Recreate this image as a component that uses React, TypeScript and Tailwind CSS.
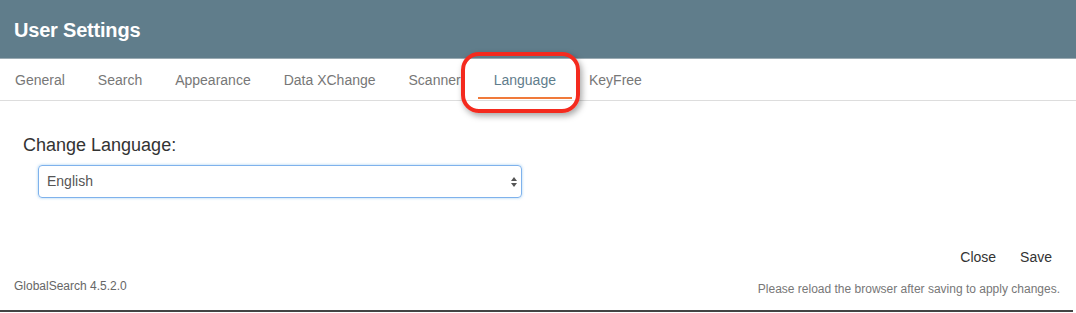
import React from "react";

const tabs = ["General", "Search", "Appearance", "Data XChange", "Scanner", "Language", "KeyFree"];

export default function App() {
  const active = "Language";
  return (
    <div className="w-[1076px] h-[313px] bg-white overflow-hidden flex flex-col" style={{ fontFamily: '"Liberation Sans", Arial, sans-serif' }}>
      <div className="h-[59px] bg-[#607d8b] border-b border-[#9aaab2] flex items-center px-[14px] shrink-0">
        <h1 className="text-white text-[20px] font-bold tracking-[-0.2px] mt-[1px]">User Settings</h1>
      </div>

      <div className="h-[42px] border-b border-[#dddddd] flex items-stretch shrink-0">
        <div className="flex items-stretch ml-[-1px] gap-[1px]">
          {tabs.map((t) => (
            <div
              key={t}
              className={`relative flex items-center px-[16px] pt-[1px] text-[14px] ${t === active ? "text-[#5f7d8c]" : "text-[#777777]"}`}
            >
              {t}
              {t === active && (
                <>
                  <span className="absolute left-[0px] right-[0px] bottom-[1px] h-[2px] bg-[#f07a3a]" />
                  <span className="absolute left-[-17px] right-[-8px] top-[-7px] bottom-[-13px] rounded-[18px] border-[4px] border-[#f42a1e] shadow-[2px_3px_6px_rgba(0,0,0,0.35)]" />
                </>
              )}
            </div>
          ))}
        </div>
      </div>

      <div className="pl-[23px] pt-[33px]">
        <h2 className="text-[18px] text-[#333333] leading-[22px]">Change Language:</h2>
        <div className="ml-[15px] mt-[9px] w-[484px] h-[33px] rounded-[4px] border border-[#7fb2ec] shadow-[0_0_3px_rgba(102,175,233,0.6)] flex items-center justify-between pl-[8px] pr-[3px]">
          <span className="text-[14px] text-[#555555]">English</span>
          <svg width="8" height="14" viewBox="0 0 8 14">
            <path d="M4 2 L7 6 L1 6 Z" fill="#555" />
            <path d="M4 12 L7 8 L1 8 Z" fill="#555" />
          </svg>
        </div>
      </div>

      <div className="flex justify-end gap-[24px] pr-[24px] mt-[49px] text-[14px] text-[#333333]">
        <span>Close</span>
        <span>Save</span>
      </div>

      <div className="flex justify-between items-end px-[14px] pr-[16px] mt-[9px] text-[12px] text-[#666666]">
        <span className="mb-[3px]">GlobalSearch 4.5.2.0</span>
        <span className="text-[#777777]">Please reload the browser after saving to apply changes.</span>
      </div>

      <div className="mt-auto h-[2px] bg-[#444444] mb-[1px] mr-[3px]" />
    </div>
  );
}
